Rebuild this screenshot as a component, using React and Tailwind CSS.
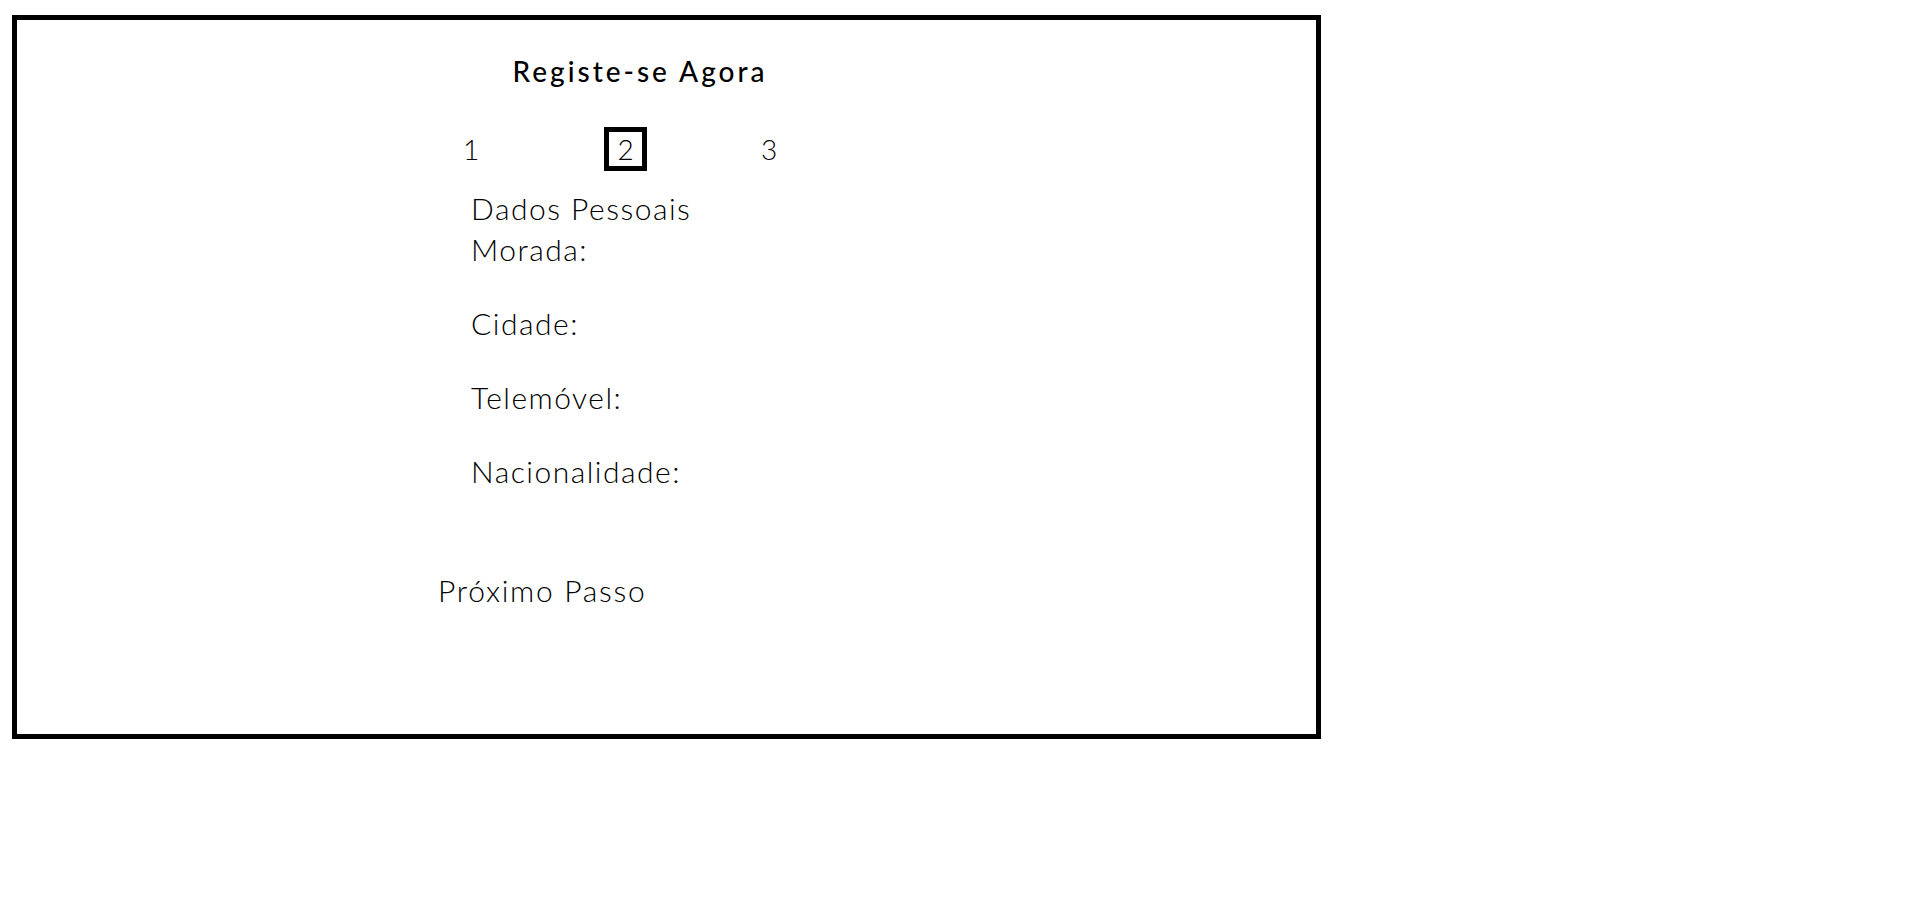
import React from 'react';

const fields = ['Morada:', 'Cidade:', 'Telemóvel:', 'Nacionalidade:'];

const StepIndicator = ({ current }) => (
    <div className="mt-[41px] h-[44px] flex items-center text-[28px] font-light leading-none">
        <span className={`ml-[23px] w-[20px] text-center ${current === 1 ? 'border-[5px] border-black' : ''}`}>1</span>
        <span className="ml-[123px] w-[43px] h-[44px] flex items-center justify-center border-[5px] border-black">2</span>
        <span className="ml-[112px] w-[20px] text-center">3</span>
    </div>
);

export default function App() {
    return (
        <div className="min-h-[903px] bg-white pt-[15px] pl-[12px] font-['Lato',sans-serif] text-black">
            <div className="w-[1309px] h-[724px] border-[5px] border-black">
                <div className="ml-[421px] w-[404px]">
                    <h1 className="mt-[36px] text-center text-[28px] leading-[30px] font-medium tracking-[3px] whitespace-nowrap">Registe-se Agora</h1>

                    <StepIndicator current={2} />

                    <form className="mt-[18px] pl-[33px] text-[30px] leading-[39px] font-light tracking-[1.5px]" onSubmit={(e) => e.preventDefault()}>
                        <p className="mb-[2px]">Dados Pessoais</p>
                        {fields.map((label) => (
                            <div key={label}>
                                <label className="block">{label}</label>
                                <div className="h-[35px]" />
                            </div>
                        ))}
                    </form>

                    <button className="mt-[45px] text-[30px] leading-[39px] font-light tracking-[1.7px]">Próximo Passo</button>
                </div>
            </div>
        </div>
    );
}
